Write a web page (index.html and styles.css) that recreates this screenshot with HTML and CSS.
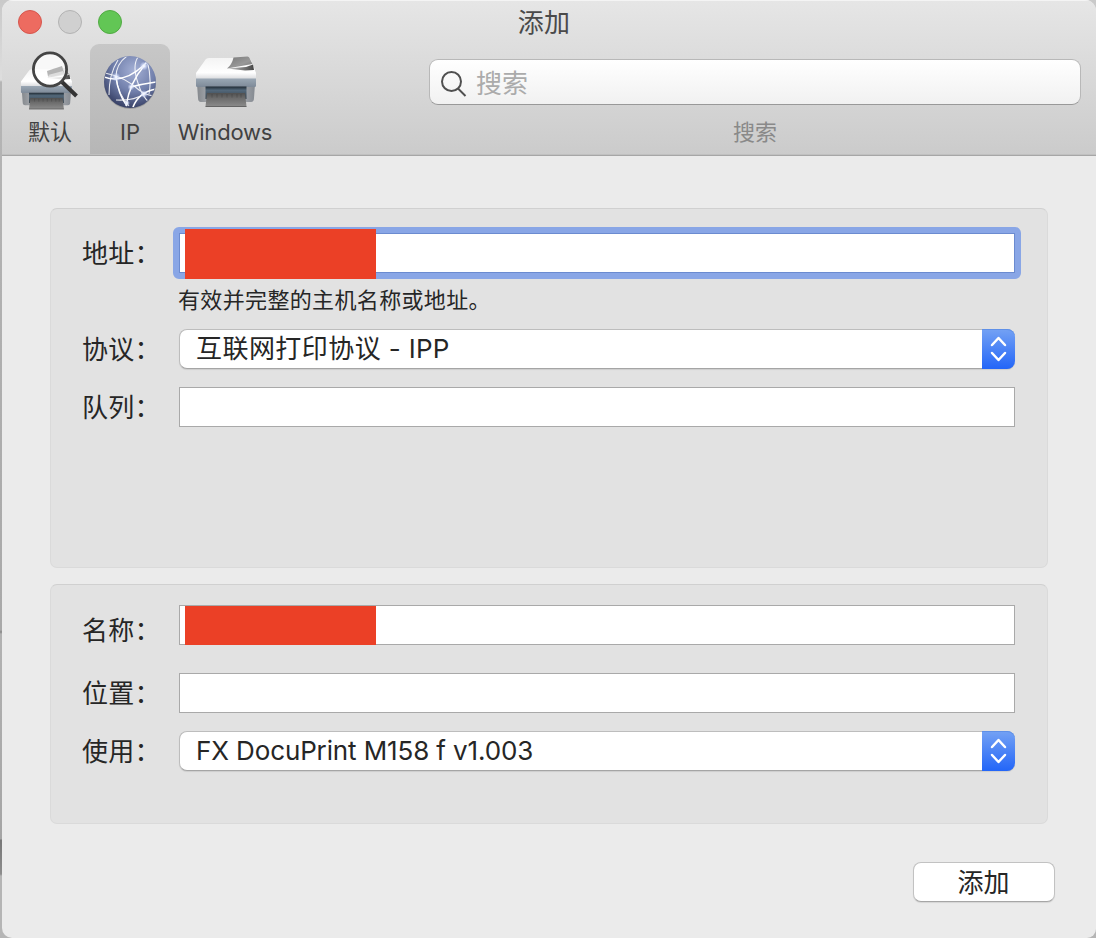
FILE: index.html
```html
<!DOCTYPE html>
<html lang="zh-CN">
<head>
<meta charset="utf-8">
<title>添加</title>
<link rel="stylesheet" href="styles.css">
</head>
<body>
<svg class="defs" width="0" height="0">
  <defs>
    <linearGradient id="shell" x1="0" y1="0" x2="0" y2="1"><stop offset="0" stop-color="#f4f4f4"/><stop offset=".7" stop-color="#fff"/><stop offset="1" stop-color="#d9dadd"/></linearGradient>
    <linearGradient id="band" x1="0" y1="0" x2="0" y2="1"><stop offset="0" stop-color="#9aa7b4"/><stop offset="1" stop-color="#7e8a98"/></linearGradient>
    <linearGradient id="leg" x1="0" y1="0" x2="1" y2="0"><stop offset="0" stop-color="#84888d"/><stop offset=".45" stop-color="#cfd2d6"/><stop offset="1" stop-color="#858a91"/></linearGradient>
    <linearGradient id="slot" x1="0" y1="0" x2="0" y2="1"><stop offset="0" stop-color="#202a33"/><stop offset=".3" stop-color="#53687a"/><stop offset="1" stop-color="#34404a"/></linearGradient>
    <linearGradient id="tray" x1="0" y1="0" x2="0" y2="1"><stop offset="0" stop-color="#505050"/><stop offset=".4" stop-color="#6c6c6c"/><stop offset="1" stop-color="#8b8b8b"/></linearGradient>
    <linearGradient id="feeder" x1="0" y1="0" x2="1" y2="1"><stop offset="0" stop-color="#777"/><stop offset=".6" stop-color="#989898"/><stop offset="1" stop-color="#777"/></linearGradient>
    <linearGradient id="recess" x1="0" y1="0" x2="1" y2="0"><stop offset="0" stop-color="#ccc"/><stop offset="1" stop-color="#444"/></linearGradient>
    <radialGradient id="globe" cx=".58" cy=".28" r=".8"><stop offset="0" stop-color="#a4b0d5"/><stop offset=".5" stop-color="#7280ac"/><stop offset="1" stop-color="#2b3357"/></radialGradient>
    <radialGradient id="glow"><stop offset="0" stop-color="#fff"/><stop offset=".35" stop-color="#e4ebff" stop-opacity=".8"/><stop offset="1" stop-color="#c8d5ff" stop-opacity="0"/></radialGradient>
    <clipPath id="ball"><circle cx="40" cy="38" r="25.500"/></clipPath>
    <g id="printer">
      <path d="M12 40h14v18H16q-3 0-3-4zM55 40h15l-1 14q0 4-3 4H55z" fill="url(#leg)"/>
      <path d="M19.500 17Q21 14 24 14h38q3 0 4.500 3L71 29v6H11v-6z" fill="url(#shell)"/>
      <path d="M11 34.500h60V42q0 1-1.500 1h-57Q11 43 11 42z" fill="url(#band)"/>
      <path d="M20.500 42.500h41V55h-41z" fill="url(#slot)"/>
      <path d="M22 49h38l1.500 13.500h-41z" fill="url(#tray)"/>
      <path d="M27 50v3.500m5-3.500v3.500m5-3.500v3.500m5-3.500v3.500m5-3.500v3.500m5-3.500v3.500m4-3.500v3.500" stroke="#303030" stroke-width="1" opacity=".3"/>
      <path d="M20.500 62.500h41" stroke="#505050" stroke-width=".8"/>
      <path d="m42 24.500 19-1.500 7-2.500 1 5.500-9 .5z" fill="url(#recess)"/>
      <path d="m48.500 13.500 14-1q1.500 0 2 1.500l3 6-25.500 4.500q5-4 6.500-11z" fill="url(#feeder)"/>
    </g>
  </defs>
</svg>
<div class="window">
  <header class="header">
    <div class="titlebar">
      <div class="lights"><i class="light red"></i><i class="light gray"></i><i class="light green"></i></div>
      <h1 class="title">添加</h1>
    </div>
    <div class="toolbar">
      <nav class="tabs">
        <div class="tab">
          <svg class="icon" width="80" height="70" viewBox="0 0 80 70">
            <use href="#printer" transform="translate(1.600 13.800) scale(.85 .82)"/>
            <circle cx="40" cy="25.500" r="16" fill="#fff" fill-opacity=".8"/>
            <path d="m37 27 15-5 2 6.500-16 4z" fill="#b5b5b5"/><path d="m38 31 15-4 1 3-13 3z" fill="#ddd"/>
            <path d="m52 38 14.500 14" stroke="#343434" stroke-width="4"/>
            <circle cx="40" cy="25.500" r="16.600" fill="none" stroke="#444" stroke-width="2.800"/>
          </svg>
          <span class="tab-label">默认</span>
        </div>
        <div class="tab selected">
          <svg class="icon" width="80" height="70" viewBox="0 0 80 70">
            <circle cx="40" cy="39" r="26" fill="#777" opacity=".45"/>
            <circle cx="40" cy="38" r="26" fill="url(#globe)"/>
            <g clip-path="url(#ball)" fill="none" stroke="#fff">
              <path d="M15 29q20 4 34 17 8 6 17 6M37 12q-11 8-11 21 2 17 13 29M48 13q-6 9 0 26 4 14 12 20M28 16q-9 14-9 35M57 16q5 18 2 34M26 56q18 1 28-6" stroke-width="1.100" opacity=".85"/>
              <path d="M14 33q20 7 40-12l6-6M54 22Q40 38 36 62M26 33q2 17 11 29" stroke-width="1.500"/>
              <path d="M66 45q-17 3-23 18M66 38q-14 2-25 5" stroke-width="1.700"/>
            </g>
            <g fill="url(#glow)"><circle cx="26" cy="33" r="4.500"/><circle cx="54" cy="22" r="4.500"/><circle cx="41" cy="43" r="3.500"/><circle cx="54" cy="50" r="4"/><circle cx="37" cy="59" r="3"/></g>
          </svg>
          <span class="tab-label">IP</span>
        </div>
        <div class="tab wide">
          <svg class="icon" width="80" height="70" viewBox="0 0 80 70"><use href="#printer"/></svg>
          <span class="tab-label latin">Windows</span>
        </div>
      </nav>
      <div class="search">
        <div class="search-field">
          <svg width="28" height="28" viewBox="0 0 28 28" fill="none" stroke="#505050" stroke-width="2"><circle cx="11.500" cy="12.500" r="9.500"/><path d="m18 19.500 7.500 7.500"/></svg>
          <span>搜索</span>
        </div>
        <span class="search-label">搜索</span>
      </div>
    </div>
  </header>
  <main class="content">
    <section class="panel connection">
      <div class="row">
        <label>地址：</label><div class="field focused"><i class="redaction"></i></div>
      </div>
      <p class="hint">有效并完整的主机名称或地址。</p>
      <div class="row protocol">
        <label>协议：</label>
        <div class="select"><span class="value"><span class="cjk">互联网打印协议</span> - IPP</span><span class="stepper"><svg width="17" height="26" viewBox="0 0 17 26" fill="none" stroke="#fff" stroke-width="2.500" stroke-linecap="round" stroke-linejoin="round"><path d="m2 9 6.500-7 6.500 7M2 17l6.500 7 6.500-7"/></svg></span></div>
      </div>
      <div class="row queue"><label>队列：</label><div class="field"></div></div>
    </section>
    <section class="panel identity">
      <div class="row name"><label>名称：</label><div class="field"><i class="redaction"></i></div></div>
      <div class="row location"><label>位置：</label><div class="field"></div></div>
      <div class="row queue">
        <label>使用：</label>
        <div class="select"><span class="value driver">FX DocuPrint M158 f v1.003</span><span class="stepper"><svg width="17" height="26" viewBox="0 0 17 26" fill="none" stroke="#fff" stroke-width="2.500" stroke-linecap="round" stroke-linejoin="round"><path d="m2 9 6.500-7 6.500 7M2 17l6.500 7 6.500-7"/></svg></span></div>
      </div>
    </section>
    <div class="actions"><button class="add">添加</button></div>
  </main>
</div>
</body>
</html>
```
FILE: styles.css
```css
* { box-sizing: border-box; }
body {
  margin: 0;
  height: 938px;
  overflow: hidden;
  padding-left: 2px;
  background: linear-gradient(#c9c9c9 0, #dedede 80px, #b5b5b5 82px, #a9a9a9 630px, #898989 632px, #b2b2b2 634px, #a5a5a5 839px, #777 840px, #8d8d8d 874px, #b5b5b5 876px, #b5b5b5);
  font-family: Inter, "Noto Sans CJK SC", sans-serif;
  color: #262626;
}
.defs { position: absolute; }
.window { height: 938px; background: #ebebeb; border-radius: 11px 11px 9px 10px; overflow: hidden; }
.header {
  height: 156px;
  background: linear-gradient(#e6e6e6, #cbcbcb);
  border-bottom: 1px solid #a6a6a6;
  box-shadow: inset 0 1px #f4f4f4, inset 0 -1px #c0c0c0;
}
.titlebar { height: 44px; display: grid; grid-template-columns: 1fr auto 1fr; align-items: center; padding: 0 14px 0 16px; }
.lights { display: flex; gap: 16px; }
.light { width: 24px; height: 24px; border-radius: 50%; border: 1px solid; }
.red { background: #ed6b60; border-color: #d5564d; }
.gray { background: #d0d0d0; border-color: #b2b2b2; }
.green { background: #62c655; border-color: #51aa43; }
.title { margin: 0; font-size: 26px; line-height: 40px; font-weight: 400; color: #4a4a4a; padding: 2px 12px 0 0; letter-spacing: .3px; }
.toolbar { height: 111px; display: flex; padding-left: 8px; }
.tabs { display: flex; }
.tab { width: 80px; height: 110px; display: flex; flex-direction: column; align-items: center; }
.wide { width: 110px; }
.selected { background: linear-gradient(#c7c7c7, #b6b6b6); border-radius: 9px 9px 0 0; }
.icon { display: block; flex: none; }
.tab-label { font-size: 22px; line-height: 36px; color: #414141; white-space: nowrap; }
.latin { letter-spacing: -.2px; }
.search { width: 652px; margin: 15px 0 0 149px; display: flex; flex-direction: column; }
.search-field {
  height: 46px; border: 1px solid #b8b8b8; border-bottom-color: #999; border-radius: 9px;
  background: linear-gradient(#fff, #f1f1f1); display: flex; align-items: center; gap: 8px; padding: 0 0 1px 10px;
  font-size: 26px; line-height: 38px; color: #ababab;
}
.search-field svg { margin-top: 2px; }
.search-field span { padding-top: 4px; }
.search-label { align-self: center; font-size: 22px; line-height: 30px; margin-top: 12px; color: #898989; }
.content { padding: 52px 48px 0; }
.panel { width: 998px; background: #e2e2e2; border: 1px solid #dadada; border-top-color: #d0d0d0; border-radius: 7px; padding-left: 31px; }
.connection { height: 360px; padding-top: 24px; }
.identity { height: 240px; margin-top: 16px; padding-top: 20px; }
.row { display: grid; grid-template-columns: 97px 836px; height: 40px; }
label { font-size: 26px; line-height: 41px; white-space: nowrap; letter-spacing: .2px; }
.name label { line-height: 52px; }
.field { height: 40px; background: #fff; border: 1px solid #a9a9a9; position: relative; }
.focused { border-color: #6b8bd0; }
.focused::before { content: ""; position: absolute; inset: -7px; border: 6px solid #89a6e6; border-radius: 6px; }
.redaction { display: block; position: absolute; left: 5px; top: 0; width: 191px; height: 39px; background: #eb4026; }
.focused .redaction { top: -5px; height: 50px; }
.hint { margin: 11px 0 0 96px; font-size: 22px; line-height: 32px; letter-spacing: .35px; }
.protocol { margin-top: 13px; }
.queue { margin-top: 18px; }
.location { margin-top: 28px; }
.select {
  height: 40px; display: flex; justify-content: space-between; background: #fff; border-radius: 8px;
  border: 1px solid #bdbdbd; border-right: 0; border-bottom-color: #a5a5a5; box-shadow: 0 1px 1px #00000018;
}
.value { padding-left: 16px; font-size: 26px; line-height: 38px; white-space: nowrap; letter-spacing: .3px; }
.cjk { letter-spacing: .45px; }
.driver { letter-spacing: -.12px; line-height: 38px; }
.stepper { width: 33px; margin: -1px 0; display: flex; align-items: center; justify-content: center; background: linear-gradient(#74a2f4, #2366f8); border-radius: 0 8px 8px 0; box-shadow: inset 0 1px #5f90e8; }
.actions { display: flex; justify-content: flex-end; padding: 38px 0 0; margin-right: -7px; }
.add { width: 142px; height: 40px; border: 1px solid #c2c2c2; border-bottom-color: #a6a6a6; border-radius: 8px; background: #fff; color: #262626; font: 26px/34px "Noto Sans CJK SC", sans-serif; padding: 0 1px 3px 0; box-shadow: 0 1px 1px #00000018; }
```
